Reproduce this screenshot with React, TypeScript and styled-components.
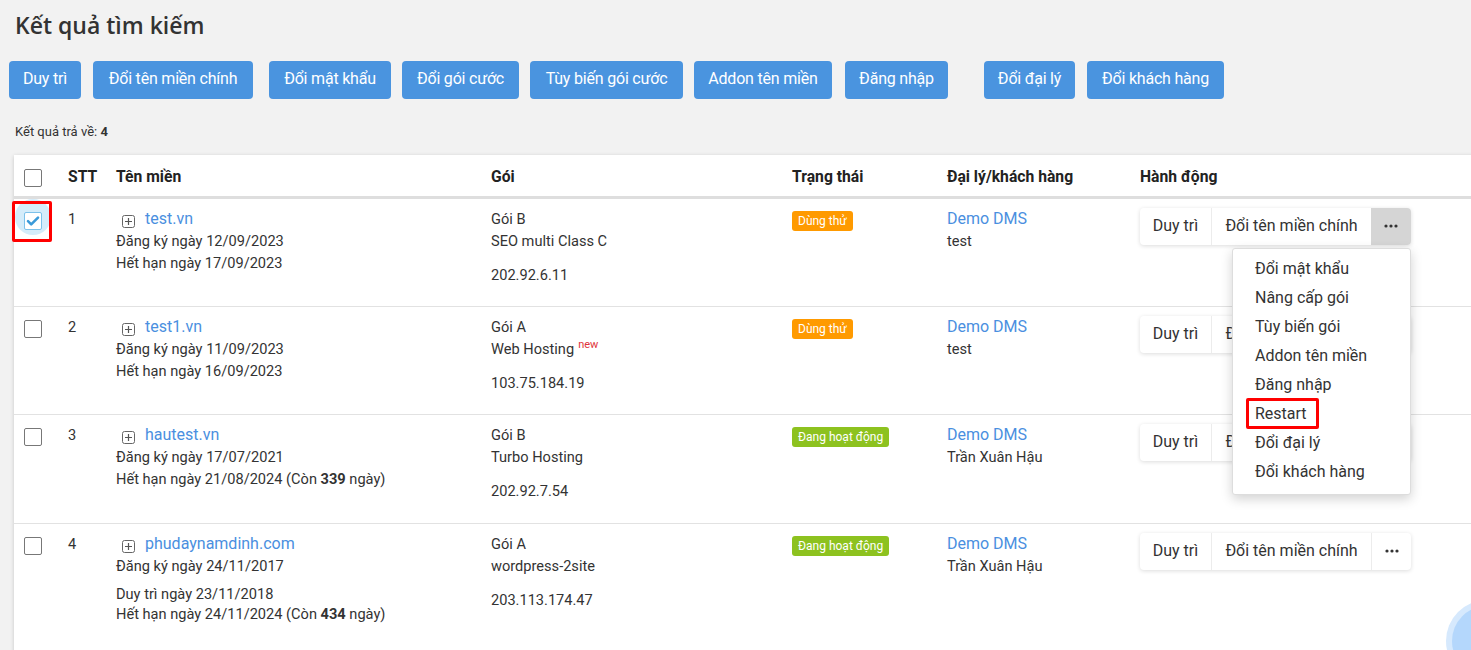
import React from "react";
import styled, { createGlobalStyle } from "styled-components";

const Global = createGlobalStyle`
  html, body { margin: 0; padding: 0; background: #f2f2f2; }
  body { font-family: Roboto, "Liberation Sans", Arial, sans-serif; color: #333; overflow: hidden; }
  * { box-sizing: border-box; }
`;

const Page = styled.div`
  position: relative;
  width: 1471px;
  height: 650px;
  overflow: hidden;
  padding: 0 0 0 9px;
`;

const Title = styled.h1`
  margin: 0;
  padding: 10px 0 0 6px;
  height: 61px;
  font-family: "Open Sans", sans-serif;
  font-weight: 600;
  font-size: 23px;
  line-height: 30px;
  color: #333;
`;

const Toolbar = styled.div`
  display: flex;
  align-items: center;
  height: 38px;
`;

const ToolButton = styled.button<{ $w: number; $ml: number }>`
  width: ${(p) => p.$w}px;
  margin-left: ${(p) => p.$ml}px;
  height: 38px;
  border: none;
  border-radius: 4px;
  background: #4a94df;
  color: #fff;
  font-family: Roboto, sans-serif;
  font-size: 16px;
  padding: 0 0 3px;
  letter-spacing: -0.2px;
  flex: none;
`;

const Count = styled.div`
  padding: 24px 0 0 6px;
  height: 56px;
  font-size: 13px;
  line-height: 18px;
  color: #333;
  b { font-weight: 700; }
`;

const Card = styled.div`
  margin-left: 5px;
  width: 1480px;
  background: #fff;
  box-shadow: 0 1px 4px rgba(0, 0, 0, 0.18);
`;

const Table = styled.table`
  border-collapse: collapse;
  table-layout: fixed;
  width: 100%;
  font-size: 14.6px;
`;

const Th = styled.th<{ $w?: number }>`
  ${(p) => (p.$w ? `width: ${p.$w}px;` : "")}
  text-align: left;
  font-weight: 700;
  font-size: 15.7px;
  height: 42px;
  padding: 2px 10px 0;
  border-bottom: 3px solid #dedede;
  vertical-align: middle;
  color: #222;
`;

const Tr = styled.tr<{ $h: number }>`
  height: ${(p) => p.$h}px;
  td { border-bottom: 1px solid #e2e2e2; }
`;

const Td = styled.td`
  vertical-align: top;
  padding: 9px 10px 0 10px;
  line-height: 22px;
  color: #333;
  position: relative;
`;

const Box = styled.span<{ $checked?: boolean }>`
  position: relative;
  display: inline-block;
  width: 18px;
  height: 18px;
  border: 1px solid ${(p) => (p.$checked ? "#7cc1ea" : "#777")};
  border-radius: 2px;
  background: #fff;
  vertical-align: middle;
  margin-top: 3px;
`;

const Ripple = styled.span`
  position: absolute;
  left: -9px;
  top: -9px;
  width: 36px;
  height: 36px;
  border-radius: 50%;
  background: #d4ecfa;
`;

const CheckWrap = styled.span`
  position: relative;
  display: inline-block;
  width: 18px;
  height: 18px;
`;

const RedFrame = styled.span<{ $l: number; $t: number; $w: number; $h: number }>`
  position: absolute;
  left: ${(p) => p.$l}px;
  top: ${(p) => p.$t}px;
  width: ${(p) => p.$w}px;
  height: ${(p) => p.$h}px;
  border: 3px solid #f00;
  border-radius: 2px;
  pointer-events: none;
`;

const DomainLine = styled.div`
  display: flex;
  align-items: center;
  gap: 10px;
  margin-left: 6px;
`;

const PlusIcon = styled.span`
  display: inline-block;
  width: 13px;
  height: 13px;
  position: relative;
`;

const Link = styled.span`
  color: #4a8fe0;
  font-size: 16px;
`;

const Line = styled.div<{ $mt?: number }>`
  margin-top: ${(p) => p.$mt ?? 0}px;
`;

const New = styled.span`
  position: relative;
  top: -6px;
  line-height: 0;
  color: #e0343b;
  font-size: 11px;
  margin-left: 4px;
`;

const Badge = styled.span<{ $color: string }>`
  display: inline-block;
  margin-top: 3px;
  height: 20px;
  line-height: 20px;
  padding: 0 6px;
  border-radius: 3px;
  background: ${(p) => p.$color};
  color: #fff;
  font-size: 12px;
`;

const AgentLink = styled.div`
  color: #4a8fe0;
  font-size: 16px;
`;

const Group = styled.div`
  display: inline-flex;
  height: 37px;
  background: #fff;
  border-radius: 4px;
  box-shadow: 0 1px 4px rgba(0, 0, 0, 0.14);
  margin-top: 0;
`;

const Seg = styled.div<{ $w: number; $active?: boolean; $sep?: boolean }>`
  width: ${(p) => p.$w}px;
  display: flex;
  align-items: center;
  justify-content: center;
  font-size: 16px;
  padding-bottom: 1px;
  color: #333;
  background: ${(p) => (p.$active ? "#d5d5d5" : "transparent")};
  border-left: ${(p) => (p.$sep ? "1px solid #ececec" : "none")};
  border-radius: ${(p) => (p.$active ? "0 4px 4px 0" : "0")};
`;

const Menu = styled.div`
  position: absolute;
  left: 102px;
  top: 49px;
  width: 179px;
  padding: 5px 0 8px;
  background: #fff;
  border: 1px solid #ddd;
  border-radius: 3px;
  box-shadow: 0 4px 12px rgba(0, 0, 0, 0.18);
  z-index: 5;
`;

const MenuItem = styled.div`
  position: relative;
  height: 29px;
  line-height: 29px;
  padding-left: 22px;
  font-size: 16px;
  color: #333;
  white-space: nowrap;
`;

const Fab = styled.div`
  position: absolute;
  left: 1452px;
  top: 606px;
  width: 70px;
  height: 70px;
  border-radius: 50%;
  background: #b4d7fc;
  box-shadow: 0 0 0 6px #d6e9fd;
  z-index: 6;
`;

const Plus = () => (
  <PlusIcon>
    <svg width="13" height="13" viewBox="0 0 13 13">
      <rect x="0.5" y="0.5" width="12" height="12" rx="2" fill="none" stroke="#666" />
      <path d="M6.5 3v7M3 6.5h7" stroke="#555" strokeWidth="1.2" />
    </svg>
  </PlusIcon>
);

const Dots = () => (
  <svg width="14" height="4" viewBox="0 0 14 4">
    <circle cx="2" cy="2" r="1.6" fill="#333" />
    <circle cx="7" cy="2" r="1.6" fill="#333" />
    <circle cx="12" cy="2" r="1.6" fill="#333" />
  </svg>
);

type Row = {
  n: number;
  domain: string;
  lines: React.ReactNode[];
  pkg: string;
  plan: React.ReactNode;
  ip: string;
  status: "trial" | "active";
  agent: string;
  customer: string;
  h: number;
  checked?: boolean;
  menu?: boolean;
};

const rows: Row[] = [
  {
    n: 1,
    domain: "test.vn",
    lines: [<Line key="a">Đăng ký ngày 12/09/2023</Line>, <Line key="b">Hết hạn ngày 17/09/2023</Line>],
    pkg: "Gói B",
    plan: "SEO multi Class C",
    ip: "202.92.6.11",
    status: "trial",
    agent: "Demo DMS",
    customer: "test",
    h: 109,
    checked: true,
    menu: true,
  },
  {
    n: 2,
    domain: "test1.vn",
    lines: [<Line key="a">Đăng ký ngày 11/09/2023</Line>, <Line key="b">Hết hạn ngày 16/09/2023</Line>],
    pkg: "Gói A",
    plan: (
      <>
        Web Hosting<New>new</New>
      </>
    ),
    ip: "103.75.184.19",
    status: "trial",
    agent: "Demo DMS",
    customer: "test",
    h: 108,
  },
  {
    n: 3,
    domain: "hautest.vn",
    lines: [
      <Line key="a">Đăng ký ngày 17/07/2021</Line>,
      <Line key="b">
        Hết hạn ngày 21/08/2024 (Còn <b>339</b> ngày)
      </Line>,
    ],
    pkg: "Gói B",
    plan: "Turbo Hosting",
    ip: "202.92.7.54",
    status: "active",
    agent: "Demo DMS",
    customer: "Trần Xuân Hậu",
    h: 109,
  },
  {
    n: 4,
    domain: "phudaynamdinh.com",
    lines: [
      <Line key="a">Đăng ký ngày 24/11/2017</Line>,
      <Line key="c" $mt={6}>
        Duy trì ngày 23/11/2018
      </Line>,
      <Line key="b" $mt={-2}>
        Hết hạn ngày 24/11/2024 (Còn <b>434</b> ngày)
      </Line>,
    ],
    pkg: "Gói A",
    plan: "wordpress-2site",
    ip: "203.113.174.47",
    status: "active",
    agent: "Demo DMS",
    customer: "Trần Xuân Hậu",
    h: 140,
  },
];

const tools: [string, number, number][] = [
  ["Duy trì", 72, 0],
  ["Đổi tên miền chính", 160, 12],
  ["Đổi mật khẩu", 122, 16],
  ["Đổi gói cước", 117, 11],
  ["Tùy biến gói cước", 153, 11],
  ["Addon tên miền", 138, 11],
  ["Đăng nhập", 103, 13],
  ["Đổi đại lý", 91, 36],
  ["Đổi khách hàng", 137, 12],
];

const menuItems = [
  "Đổi mật khẩu",
  "Nâng cấp gói",
  "Tùy biến gói",
  "Addon tên miền",
  "Đăng nhập",
  "Restart",
  "Đổi đại lý",
  "Đổi khách hàng",
];

export default function App() {
  return (
    <Page>
      <Global />
      <Title>Kết quả tìm kiếm</Title>
      <Toolbar>
        {tools.map(([t, w, ml]) => (
          <ToolButton key={t} $w={w} $ml={ml}>
            {t}
          </ToolButton>
        ))}
      </Toolbar>
      <Count>
        Kết quả trả về: <b>4</b>
      </Count>
      <Card>
        <Table>
          <thead>
            <tr>
              <Th $w={44}>
                <Box />
              </Th>
              <Th $w={48}>STT</Th>
              <Th $w={375}>Tên miền</Th>
              <Th $w={301}>Gói</Th>
              <Th $w={155}>Trạng thái</Th>
              <Th $w={193}>Đại lý/khách hàng</Th>
              <Th>Hành động</Th>
            </tr>
          </thead>
          <tbody>
            {rows.map((r) => (
              <Tr key={r.n} $h={r.h}>
                <Td>
                  <CheckWrap>
                    {r.checked && <Ripple />}
                    <Box $checked={r.checked}>
                      {r.checked && (
                        <svg
                          width="16"
                          height="16"
                          viewBox="0 0 16 16"
                          style={{ position: "absolute", left: 0, top: 0 }}
                        >
                          <path
                            d="M3 8.2l3.2 3.2L13 4.6"
                            fill="none"
                            stroke="#3a9ad9"
                            strokeWidth="2.6"
                            strokeLinecap="round"
                            strokeLinejoin="round"
                          />
                        </svg>
                      )}
                    </Box>
                  </CheckWrap>
                  {r.checked && <RedFrame $l={-2} $t={2} $w={40} $h={41} />}
                </Td>
                <Td>{r.n}</Td>
                <Td>
                  <DomainLine>
                    <Plus />
                    <Link>{r.domain}</Link>
                  </DomainLine>
                  {r.lines}
                </Td>
                <Td>
                  <Line>{r.pkg}</Line>
                  <Line>{r.plan}</Line>
                  <Line $mt={12}>{r.ip}</Line>
                </Td>
                <Td>
                  {r.status === "trial" ? (
                    <Badge $color="#ff9a00">Dùng thử</Badge>
                  ) : (
                    <Badge $color="#8dc21f">Đang hoạt động</Badge>
                  )}
                </Td>
                <Td>
                  <AgentLink>{r.agent}</AgentLink>
                  <Line>{r.customer}</Line>
                </Td>
                <Td>
                  <Group>
                    <Seg $w={71}>Duy trì</Seg>
                    <Seg $w={160} $sep>
                      Đổi tên miền chính
                    </Seg>
                    <Seg $w={40} $sep={!r.menu} $active={r.menu}>
                      <Dots />
                    </Seg>
                  </Group>
                  {r.menu && (
                    <Menu>
                      {menuItems.map((m) => (
                        <MenuItem key={m}>
                          {m}
                          {m === "Restart" && <RedFrame $l={13} $t={-1} $w={73} $h={31} />}
                        </MenuItem>
                      ))}
                    </Menu>
                  )}
                </Td>
              </Tr>
            ))}
          </tbody>
        </Table>
      </Card>
      <Fab />
    </Page>
  );
}
